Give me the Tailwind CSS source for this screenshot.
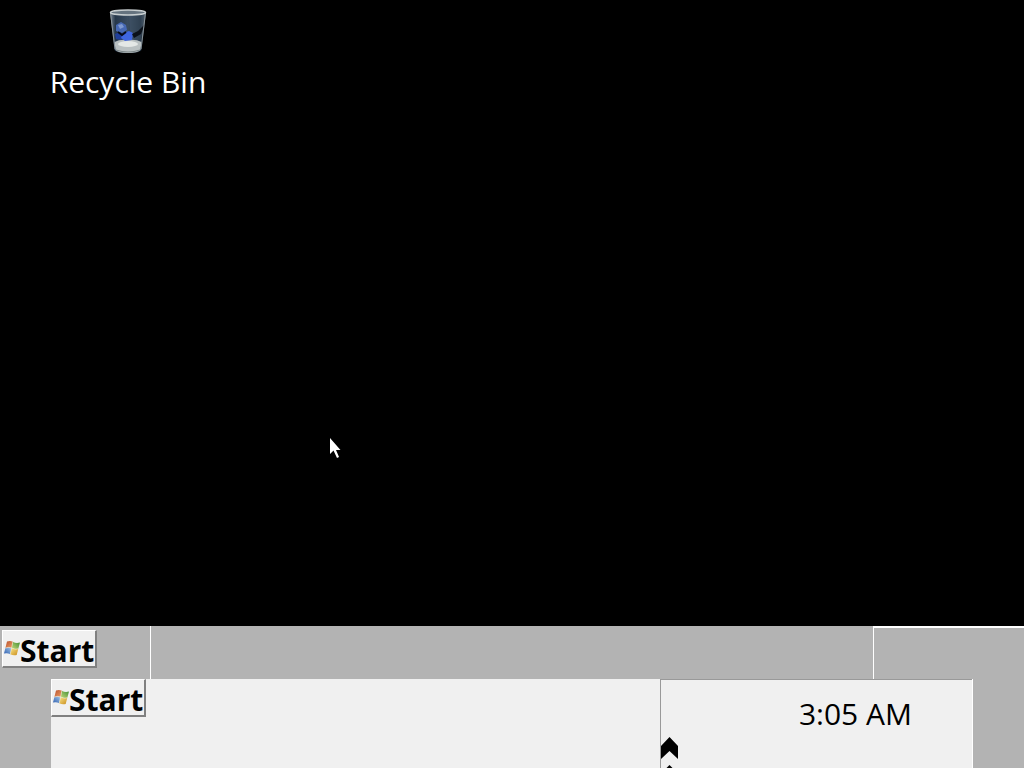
<!DOCTYPE html>
<html lang="en">
  <head>
    <meta charset="UTF-8" />
    <title>Desktop</title>
    <script src="https://cdn.jsdelivr.net/npm/@tailwindcss/browser@4"></script>
  </head>
  <body
    class="h-screen overflow-hidden bg-black flex flex-col font-['Open_Sans',sans-serif]"
  >
    <!-- shared Start flag -->
    <svg class="absolute w-0 h-0">
      <defs>
        <linearGradient id="red" x1="0" y1="0" x2="1" y2="1">
          <stop offset="0" stop-color="#b8502c" />
          <stop offset="1" stop-color="#eda068" />
        </linearGradient>
        <linearGradient id="green" x1="1" y1="0" x2="0" y2="1">
          <stop offset="0" stop-color="#3f8f35" />
          <stop offset="1" stop-color="#c5d878" />
        </linearGradient>
        <linearGradient id="blue" x1="0" y1="1" x2="1" y2="0">
          <stop offset="0" stop-color="#2f5fb0" />
          <stop offset="1" stop-color="#a5c8e8" />
        </linearGradient>
        <linearGradient id="yellow" x1="1" y1="1" x2="0" y2="0">
          <stop offset="0" stop-color="#c98d1c" />
          <stop offset="1" stop-color="#fbe68a" />
        </linearGradient>
        <symbol id="flag" viewBox="0 0 16 16">
          <path d="M3 1.500Q6 .2 8.900 1.700L7.700 8Q4.500 6.800 1.400 8Z" fill="url(#red)" />
          <path d="M8.900 1.700Q12 3.800 16 2.500L14.300 8.800Q11 9.800 7.700 8Z" fill="url(#green)" />
          <path d="M1.400 8Q4.500 6.800 7.700 8L6.200 14.200Q3.300 12.500 0 13.500Z" fill="url(#blue)" />
          <path d="M7.700 8Q11 9.800 14.300 8.800L12.700 15Q9.200 16 6.200 14.200Z" fill="url(#yellow)" />
          <path d="M8.900 1.700L6.200 14.200M1.400 8Q4.500 6.800 7.700 8Q11 9.800 14.300 8.800" stroke="#f4f0dc" stroke-width=".5" fill="none" />
        </symbol>
      </defs>
    </svg>

    <main class="flex-1 relative">
      <a href="#" class="w-64 pt-2 flex flex-col items-center text-white">
        <svg class="w-12 h-12" viewBox="0 0 48 48">
          <defs>
            <linearGradient id="glass" x1="0" y1="0" x2="1" y2="0">
              <stop offset="0" stop-color="#7b8794" />
              <stop offset=".15" stop-color="#26374a" />
              <stop offset=".5" stop-color="#3a4c60" />
              <stop offset=".85" stop-color="#1c2a38" />
              <stop offset="1" stop-color="#66727c" />
            </linearGradient>
          </defs>
          <path d="M6 4H42L37.500 42Q36 45 24 45Q12 45 10.500 42Z" fill="url(#glass)" />
          <path d="M25 7L40 6L36 39L27 37Z" fill="#43576c" opacity=".5" />
          <path d="M10.500 34Q16 31 24 32Q32 31 37.500 34L36.500 42Q34 45 24 45Q14 45 11.500 42Z" fill="#b9c0c1" />
          <ellipse cx="24" cy="36" rx="10" ry="3" fill="#e4e8e6" />
          <path d="M12 42Q24 46 36 42" stroke="#7b8586" stroke-width="1" fill="none" />
          <path d="M12 17L17 14L22 17L23 22L18 25L12 23Z" fill="#4668b4" />
          <path d="M14 17L18 16L20 19L16 21Z" fill="#7f99cf" />
          <path d="M11 26L16 24L20 28L17 32L12 31Z" fill="#203f9c" />
          <path d="M19 25L25 23L29 25L28 32L21 33L17 30Z" fill="#3f66e0" />
          <path d="M28 26L34 23L41 16L37 26L30 30Z" fill="#0b1119" />
          <path d="M14 24L18 27L22 24" stroke="#070b18" stroke-width="2" fill="none" />
          <path d="M6.500 5L11 41M41.500 5L37 41" stroke="#89939a" stroke-width="1" />
          <ellipse cx="24" cy="4.500" rx="17.500" ry="2.500" fill="#65737f" stroke="#c8ced0" stroke-width="1.500" />
        </svg>
        <span class="mt-1 text-[30px] leading-11">Recycle Bin</span>
      </a>

      <svg class="absolute left-[329px] top-[438px] w-3 h-5" viewBox="0 0 12 20">
        <path d="M1 0V16L4.500 12.500L8 20L10 19L7 12H11.500Z" fill="#fff" />
      </svg>
    </main>

    <footer class="bg-[#b3b3b3]">
      <div class="flex h-[53px]">
        <div class="w-[151px] border-r border-white pl-[2px] pt-1">
          <button
            class="w-[95px] h-[38px] flex items-center pl-px bg-[#f0f0f0] border-t border-l border-t-white border-l-white border-b-2 border-r-2 border-b-[#808080] border-r-[#808080] text-[30px] leading-9 font-bold"
          >
            <svg class="w-4 h-4 mb-px shrink-0"><use href="#flag" /></svg>
            <span class="pt-1">Start</span>
          </button>
        </div>
        <div class="flex-1"></div>
        <div class="w-[151px] border-l border-t-2 border-white"></div>
      </div>

      <div class="flex mx-[51px] h-[89px] bg-[#f0f0f0] border-r border-white">
        <div class="flex-1">
          <button
            class="w-[95px] h-[38px] flex items-center pl-px bg-[#f0f0f0] border-t border-l border-t-white border-l-white border-b-2 border-r-2 border-b-[#808080] border-r-[#808080] text-[30px] leading-9 font-bold"
          >
            <svg class="w-4 h-4 mb-px shrink-0"><use href="#flag" /></svg>
            <span class="pt-1">Start</span>
          </button>
        </div>
        <div class="w-[312px] flex border-l border-t border-[#999999]">
          <button class="flex flex-col justify-end" aria-label="Show hidden icons">
            <svg class="w-[17px] h-[31px]" viewBox="0 0 17 31">
              <path d="M0 9L8.500 0L17 9V22L8.500 14L0 22Z" />
              <path d="M5.500 31L8.500 28L11.500 31Z" />
            </svg>
          </button>
          <time class="flex-1 pt-3 pr-15 text-right text-[30px] leading-11">3:05 AM</time>
        </div>
      </div>
    </footer>
  </body>
</html>
